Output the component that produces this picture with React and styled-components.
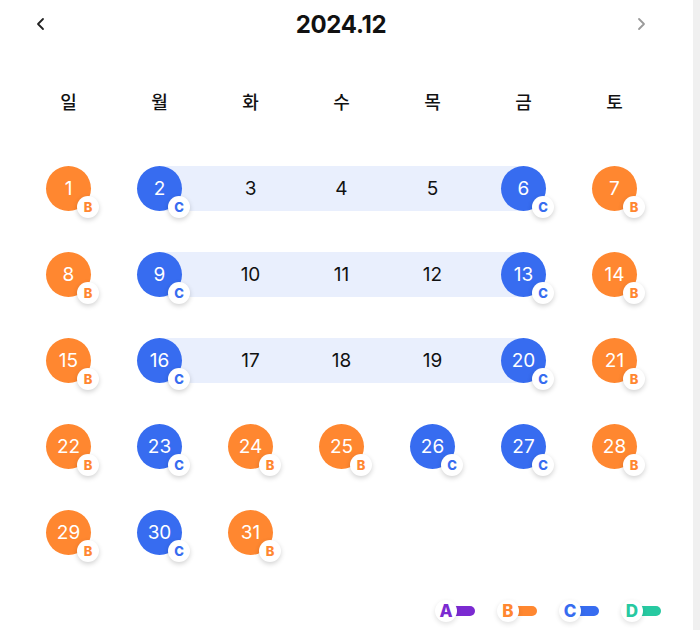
import React from 'react';
import styled, { createGlobalStyle } from 'styled-components';

const GlobalStyle = createGlobalStyle`
    html, body {
        margin: 0;
        padding: 0;
        background-color: #f0f0f0;
    }
    body {
        font-family: Inter, "Noto Sans CJK KR", sans-serif;
    }
`;

const COLORS = {
    A: '#7b2ad1',
    B: '#ff8730',
    C: '#376cf0',
    D: '#27c9a1',
};

const Page = styled.div`
    width: 693px;
    min-height: 630px;
    background-color: #fff;
    box-sizing: border-box;
    display: flex;
    flex-direction: column;
`;

const Header = styled.div`
    height: 48px;
    display: flex;
    align-items: center;
    justify-content: space-between;
    padding: 0 44px 0 33px;
`;

const Title = styled.h1`
    margin: 0;
    font-family: Inter, sans-serif;
    font-size: 24px;
    font-weight: 700;
    color: #111;
    letter-spacing: -0.3px;
`;

const NavButton = styled.button`
    border: none;
    background: none;
    padding: 0;
    width: 16px;
    height: 16px;
    display: flex;
    align-items: center;
    justify-content: center;
    color: ${(p) => (p.dim ? '#9a9a9a' : '#222')};
    cursor: pointer;
`;

const Grid = styled.div`
    display: grid;
    grid-template-columns: repeat(7, 91px);
    padding-left: 23px;
`;

const WeekdayRow = styled(Grid)`
    margin-top: 40px;
    height: 26px;
    align-items: center;
`;

const Weekday = styled.div`
    text-align: center;
    font-family: "Noto Sans CJK KR", sans-serif;
    font-size: 18px;
    font-weight: 500;
    color: #111;
`;

const Weeks = styled.div`
    margin-top: 52px;
    display: flex;
    flex-direction: column;
    gap: 41px;
`;

const WeekRow = styled(Grid)`
    height: 45px;
    grid-template-rows: 45px;
`;

const RangeBar = styled.div`
    grid-row: 1;
    grid-column: 2 / 7;
    margin: 0 45px 0 46px;
    background-color: #e9effd;
`;

const Cell = styled.div`
    grid-row: 1;
    grid-column: ${(p) => p.col};
    display: flex;
    justify-content: center;
    align-items: center;
    z-index: 1;
`;

const Day = styled.div`
    position: relative;
    width: 45px;
    height: 45px;
    border-radius: 50%;
    background-color: ${(p) => (p.type ? COLORS[p.type] : 'transparent')};
    color: ${(p) => (p.type ? '#fff' : '#111')};
    display: flex;
    align-items: center;
    justify-content: center;
    font-size: 19px;
    font-weight: 400;
`;

const Badge = styled.span`
    position: absolute;
    left: 31px;
    top: 30px;
    width: 22px;
    height: 22px;
    border-radius: 50%;
    background-color: #fff;
    box-shadow: 0 2px 5px rgba(0, 0, 0, 0.18);
    color: ${(p) => COLORS[p.type]};
    font-size: 13px;
    font-weight: 800;
    display: flex;
    align-items: center;
    justify-content: center;
`;

const Legend = styled.div`
    margin-top: 45px;
    display: flex;
    justify-content: flex-end;
    gap: 22px;
    padding-right: 32px;
`;

const LegendItem = styled.div`
    position: relative;
    width: 40px;
    height: 22px;
    display: flex;
    align-items: center;
`;

const LegendPill = styled.span`
    position: absolute;
    left: 14px;
    top: 6px;
    width: 26px;
    height: 10px;
    border-radius: 0 5px 5px 0;
    background-color: ${(p) => COLORS[p.type]};
`;

const LegendDot = styled.span`
    position: relative;
    z-index: 1;
    width: 22px;
    height: 22px;
    border-radius: 50%;
    background-color: #fff;
    box-shadow: 0 2px 5px rgba(0, 0, 0, 0.12);
    color: ${(p) => COLORS[p.type]};
    font-size: 17px;
    font-weight: 800;
    display: flex;
    align-items: center;
    justify-content: center;
`;

const weekdays = ['일', '월', '화', '수', '목', '금', '토'];

const weeks = [
    { range: true, days: [[1, 'B'], [2, 'C'], [3], [4], [5], [6, 'C'], [7, 'B']] },
    { range: true, days: [[8, 'B'], [9, 'C'], [10], [11], [12], [13, 'C'], [14, 'B']] },
    { range: true, days: [[15, 'B'], [16, 'C'], [17], [18], [19], [20, 'C'], [21, 'B']] },
    { range: false, days: [[22, 'B'], [23, 'C'], [24, 'B'], [25, 'B'], [26, 'C'], [27, 'C'], [28, 'B']] },
    { range: false, days: [[29, 'B'], [30, 'C'], [31, 'B']] },
];

const Chevron = ({ dir }) => (
    <svg width="14" height="14" viewBox="0 0 14 14" fill="none" stroke="currentColor" strokeWidth="1.8" strokeLinecap="round" strokeLinejoin="round">
        {dir === 'left' ? <path d="M9 2 L4 7 L9 12" /> : <path d="M5 2 L10 7 L5 12" />}
    </svg>
);

const App = () => {
    return (
        <Page>
            <GlobalStyle />
            <Header>
                <NavButton><Chevron dir="left" /></NavButton>
                <Title>2024.12</Title>
                <NavButton dim><Chevron dir="right" /></NavButton>
            </Header>
            <WeekdayRow>
                {weekdays.map((d) => <Weekday key={d}>{d}</Weekday>)}
            </WeekdayRow>
            <Weeks>
                {weeks.map((week, i) => (
                    <WeekRow key={i}>
                        {week.range && <RangeBar />}
                        {week.days.map(([num, type], col) => (
                            <Cell key={num} col={col + 1}>
                                <Day type={type}>
                                    {num}
                                    {type && <Badge type={type}>{type}</Badge>}
                                </Day>
                            </Cell>
                        ))}
                    </WeekRow>
                ))}
            </Weeks>
            <Legend>
                {['A', 'B', 'C', 'D'].map((t) => (
                    <LegendItem key={t}>
                        <LegendPill type={t} />
                        <LegendDot type={t}>{t}</LegendDot>
                    </LegendItem>
                ))}
            </Legend>
        </Page>
    );
};

export default App;
